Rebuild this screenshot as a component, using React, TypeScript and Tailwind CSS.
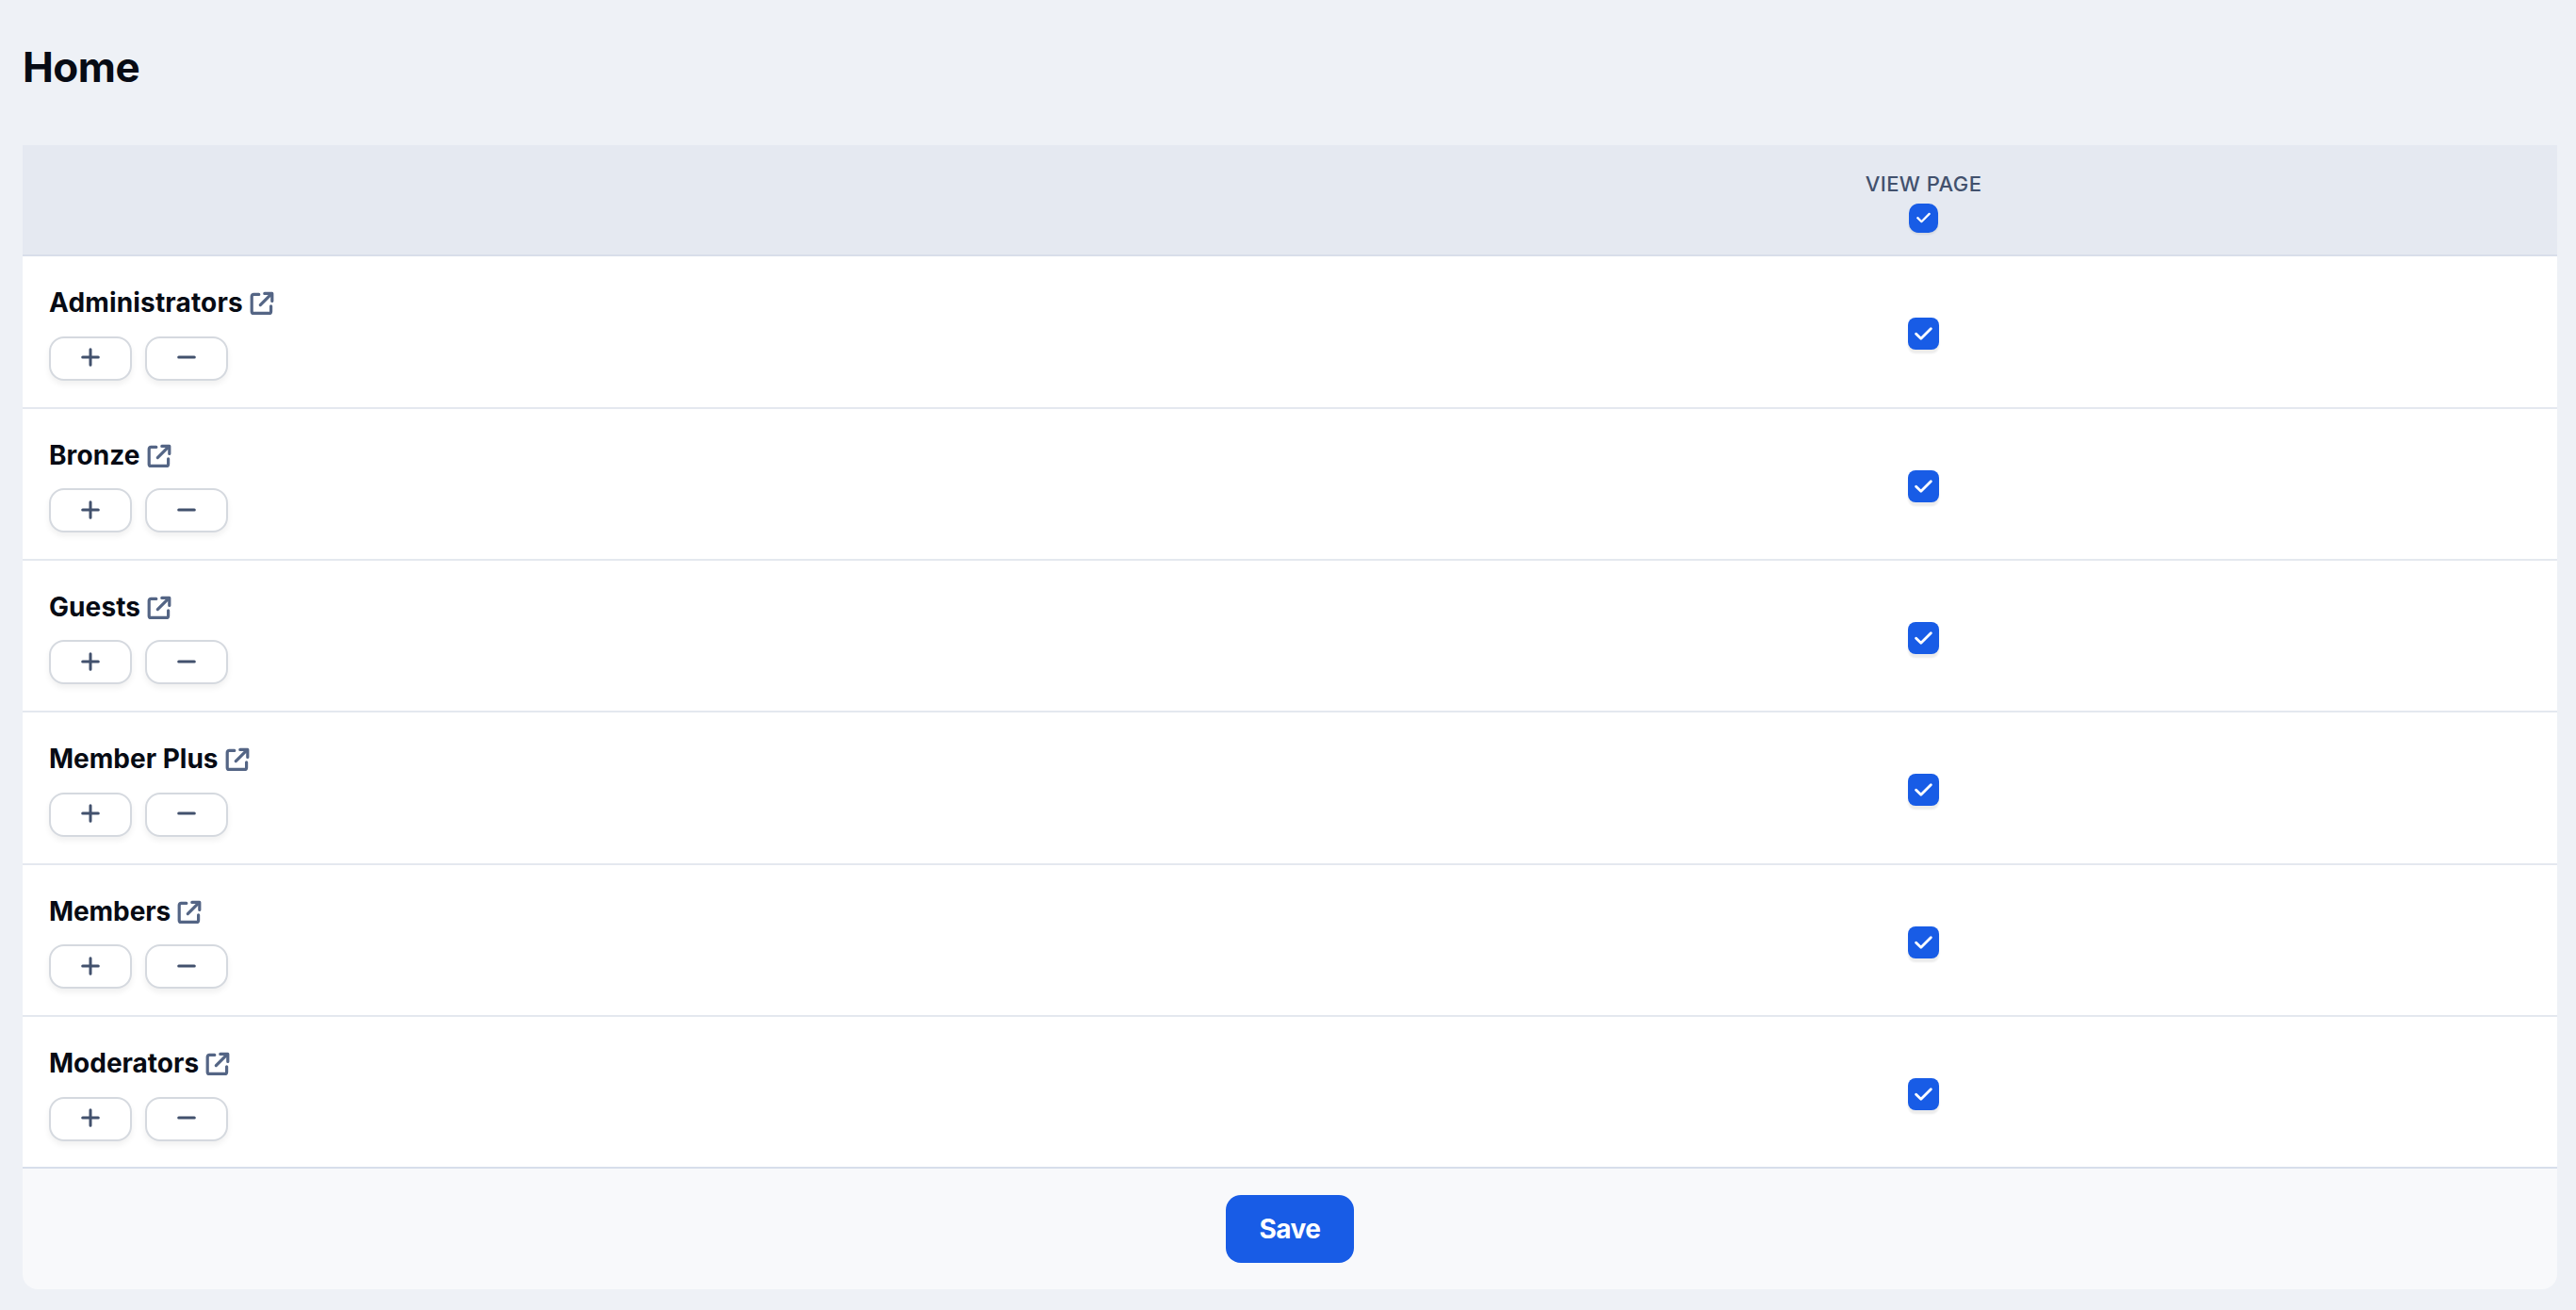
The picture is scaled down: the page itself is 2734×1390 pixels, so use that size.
import type React from "react"

interface Group {
  name: string
  rowClass: string
  nameClass: string
  actionsClass: string
}

const groups: Group[] = [
  { name: "Administrators", rowClass: "h-[162px]", nameClass: "tracking-[0.006em]", actionsClass: "mt-[17px]" },
  { name: "Bronze", rowClass: "h-[161px]", nameClass: "tracking-[0.003em]", actionsClass: "mt-4 [&_svg]:translate-y-px" },
  { name: "Guests", rowClass: "h-[161px]", nameClass: "tracking-[0.003em]", actionsClass: "mt-4 [&_svg]:translate-y-px" },
  { name: "Member Plus", rowClass: "h-[162px]", nameClass: "tracking-normal", actionsClass: "mt-[17px]" },
  { name: "Members", rowClass: "h-[161px]", nameClass: "tracking-[-0.003em]", actionsClass: "mt-4 [&_svg]:translate-y-px" },
  { name: "Moderators", rowClass: "h-[161px]", nameClass: "tracking-normal", actionsClass: "mt-[17px]" },
]

const ExternalIcon: React.FC = () => (
  <svg
    className="h-[26px] w-[26px] text-[#546585]"
    viewBox="0 0 26 26"
    fill="none"
    stroke="currentColor"
    strokeWidth="3.2"
    strokeLinecap="round"
    strokeLinejoin="round"
  >
    <path d="M9.8 3.4H4.2a2 2 0 0 0-2 2v16a2 2 0 0 0 2 2h16.4a2 2 0 0 0 2-2V15.8" />
    <path d="M11.3 14.6 22.8 3.2" />
    <path d="M15.8 2.4h8v8" />
    <path d="M20.5 2.4h3.3v3.3z" fill="currentColor" strokeWidth="1.5" />
  </svg>
)

const Checkbox: React.FC<{ small?: boolean }> = ({ small }) => (
  <button
    type="button"
    role="checkbox"
    aria-checked="true"
    className={`flex items-center justify-center bg-[#185ce6] text-white ${
      small
        ? "h-[31px] w-[31px] rounded-[10px] pb-px shadow-[0_2px_2px_rgba(0,0,0,0.08)]"
        : "h-[34px] w-[33px] rounded-[8px] shadow-[0_4px_2px_rgba(0,0,0,0.08)]"
    }`}
  >
    <svg
      className={small ? "h-[12px] w-[15px]" : "h-[14px] w-[19px]"}
      viewBox="0 0 19 14"
      fill="none"
      stroke="currentColor"
      strokeWidth="2.8"
      strokeLinecap="round"
      strokeLinejoin="round"
    >
      <path d="M1.6 7.2 6.8 12.3 17.3 1.8" />
    </svg>
  </button>
)

const RoundButton: React.FC<{ label: string; path: string }> = ({ label, path }) => (
  <button
    type="button"
    aria-label={label}
    className="flex h-[47px] w-[88px] items-center justify-center rounded-[16px] border-2 border-[#d5d9df] bg-white pb-[3px] text-[#42516d] shadow-[0_4px_6px_rgba(0,0,0,0.06)]"
  >
    <svg className="h-5 w-5" viewBox="0 0 20 20" fill="none" stroke="currentColor" strokeWidth="3" strokeLinecap="round">
      <path d={path} />
    </svg>
  </button>
)

const GroupRow: React.FC<{ group: Group }> = ({ group }) => (
  <div
    className={`grid grid-cols-[1982px_71px_1fr] border-b-2 border-[#e4e8ef] bg-white last:border-[#d7deeb] ${group.rowClass}`}
  >
    <div className="pt-[30px] pl-7">
      <div className="flex h-[38px] items-center">
        <span className={`text-[28px] leading-[38px] font-bold ${group.nameClass}`}>{group.name}</span>
        <span className="mt-0.5 ml-[7px]">
          <ExternalIcon />
        </span>
      </div>
      <div className={`flex gap-3.5 ${group.actionsClass}`}>
        <RoundButton label="Allow all" path="M10 1.7v16.6M1.7 10h16.6" />
        <RoundButton label="Deny all" path="M1.7 10h16.6" />
      </div>
    </div>
    <div className="flex items-start justify-center pt-[65px]">
      <Checkbox />
    </div>
  </div>
)

export default function App() {
  return (
    <div className="h-[1390px] w-[2734px] overflow-hidden bg-[#eef1f6] pr-5 pl-6 font-['Inter',sans-serif] text-[#070b14]">
      <h1 className="h-[154px] pt-[44px] text-[44px] leading-[54px] font-bold tracking-[-0.012em]">Home</h1>
      <div className="overflow-hidden rounded-b-[16px]">
        <div className="grid h-[118px] grid-cols-[1982px_71px_1fr] border-b-2 border-[#d8deea] bg-[#e5e9f1]">
          <div />
          <div className="flex flex-col items-center pt-[27px]">
            <span className="text-[22px] leading-7 font-medium tracking-[0.02em] whitespace-nowrap text-[#42516d]">
              VIEW PAGE
            </span>
            <div className="mt-[7px]">
              <Checkbox small />
            </div>
          </div>
        </div>
        <div>
          {groups.map((group) => (
            <GroupRow key={group.name} group={group} />
          ))}
        </div>
        <div className="flex h-32 items-center justify-center bg-[#f8f9fb]">
          <button
            type="button"
            className="h-[72px] w-[136px] rounded-[16px] bg-[#185ce6] text-[28px] font-bold tracking-[-0.02em] text-white"
          >
            Save
          </button>
        </div>
      </div>
    </div>
  )
}
